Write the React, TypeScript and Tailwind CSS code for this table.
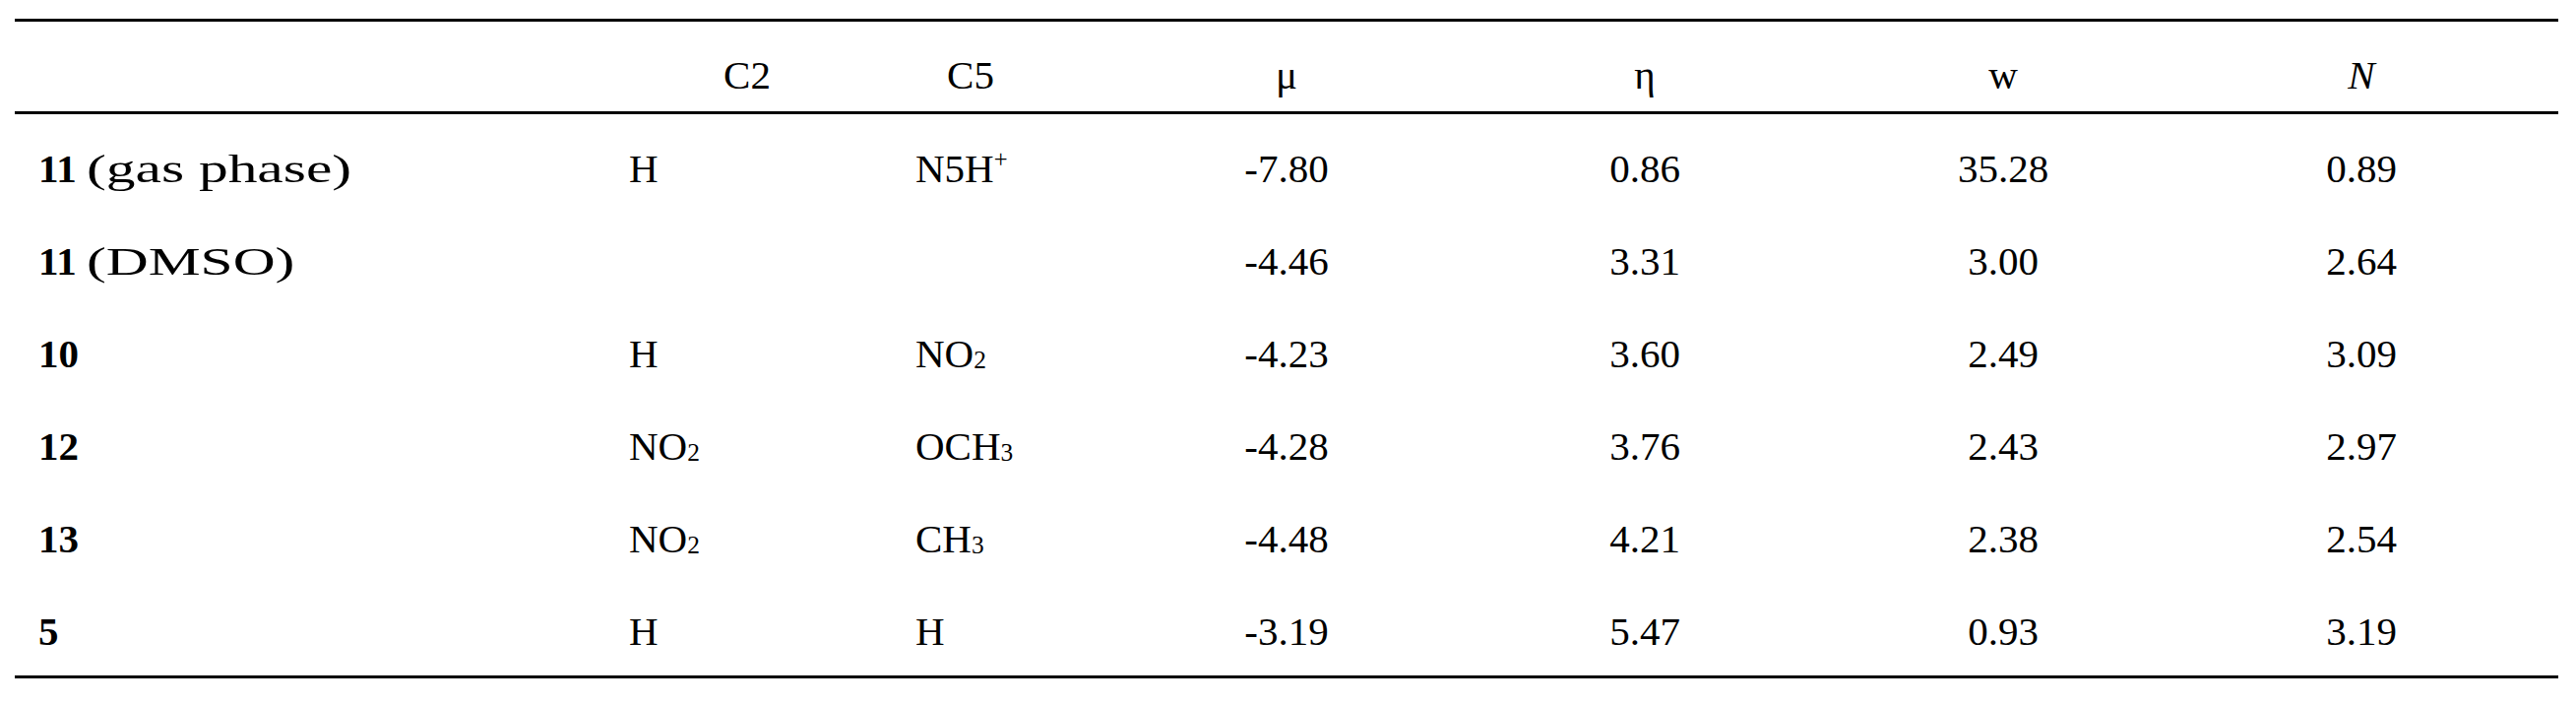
import React from "react";

type Row = {
  id: string;
  note?: string;
  c2: React.ReactNode;
  c5: React.ReactNode;
  mu: string;
  eta: string;
  w: string;
  n: string;
};

const NO2 = (
  <>
    NO<sub className="text-[0.62em] bottom-[-0.05em]">2</sub>
  </>
);

const rows: Row[] = [
  {
    id: "11",
    note: "(gas phase)",
    c2: "H",
    c5: (
      <>
        N5H<sup className="text-[0.6em] top-[-0.6em]">+</sup>
      </>
    ),
    mu: "-7.80",
    eta: "0.86",
    w: "35.28",
    n: "0.89",
  },
  { id: "11", note: "(DMSO)", c2: "", c5: "", mu: "-4.46", eta: "3.31", w: "3.00", n: "2.64" },
  { id: "10", c2: "H", c5: NO2, mu: "-4.23", eta: "3.60", w: "2.49", n: "3.09" },
  {
    id: "12",
    c2: NO2,
    c5: (
      <>
        OCH<sub className="text-[0.62em] bottom-[-0.05em]">3</sub>
      </>
    ),
    mu: "-4.28",
    eta: "3.76",
    w: "2.43",
    n: "2.97",
  },
  {
    id: "13",
    c2: NO2,
    c5: (
      <>
        CH<sub className="text-[0.62em] bottom-[-0.05em]">3</sub>
      </>
    ),
    mu: "-4.48",
    eta: "4.21",
    w: "2.38",
    n: "2.54",
  },
  { id: "5", c2: "H", c5: "H", mu: "-3.19", eta: "5.47", w: "0.93", n: "3.19" },
];

const cols = "grid grid-cols-[605px_278px_227px_364px_364px_364px_382px]";

export default function App() {
  return (
    <div className="min-h-screen bg-white pt-[19px] pl-[15px] text-black font-['Liberation_Serif',serif] text-[41px] leading-none">
      <div className="w-[2584px] border-y-[3px] border-black">
        <div className={`${cols} h-[94px] items-center pt-[17px] border-b-[3px] border-black`}>
          <div />
          <div className="text-center">C2</div>
          <div className="text-center pr-[51px]">C5</div>
          <div className="text-center">μ</div>
          <div className="text-center">η</div>
          <div className="text-center">w</div>
          <div className="text-center pr-[18px] italic">N</div>
        </div>
        {rows.map((r, i) => (
          <div
            key={i}
            className={`${cols} items-center pt-[16px] ${i === rows.length - 1 ? "h-[100px] pb-[6px]" : "h-[94px]"}`}
          >
            <div className="pl-[24px] whitespace-nowrap">
              <span className="font-bold">{r.id}</span>
              {r.note && (
                <>
                  {" "}
                  <span className="inline-block origin-left scale-x-[1.45]">{r.note}</span>
                </>
              )}
            </div>
            <div className="pl-[19px]">{r.c2}</div>
            <div className="pl-[32px]">{r.c5}</div>
            <div className="text-center">{r.mu}</div>
            <div className="text-center">{r.eta}</div>
            <div className="text-center">{r.w}</div>
            <div className="text-center pr-[18px]">{r.n}</div>
          </div>
        ))}
      </div>
    </div>
  );
}
